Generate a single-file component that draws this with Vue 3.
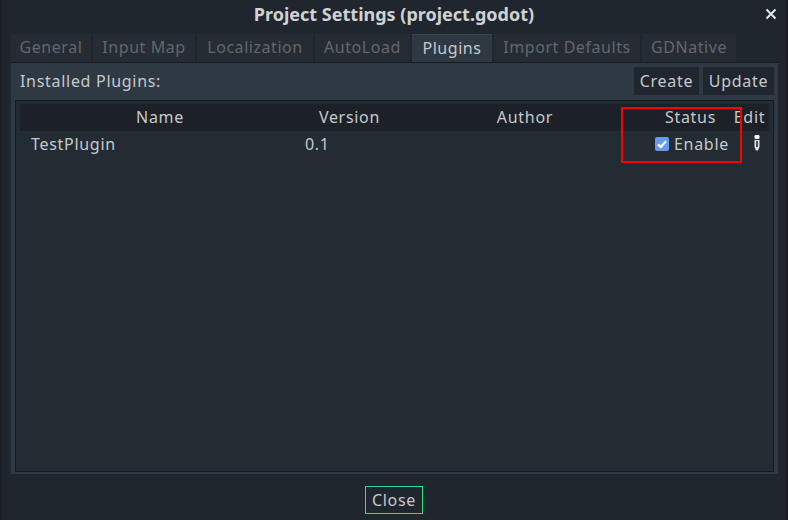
<template>
  <div class="window">
    <div class="titlebar">
      <span class="title">Project Settings (project.godot)</span>
      <svg class="close-x" width="12" height="12" viewBox="0 0 12 12">
        <path d="M1.5 1.5 L10.5 10.5 M10.5 1.5 L1.5 10.5" stroke="#e6e8ea" stroke-width="2" />
      </svg>
    </div>

    <div class="tabs">
      <div
        v-for="tab in tabs"
        :key="tab.name"
        class="tab"
        :class="{ active: tab.name === 'Plugins' }"
        :style="{ width: tab.width + 'px' }"
      >{{ tab.name }}</div>
    </div>

    <div class="panel">
      <div class="toolbar">
        <span class="installed">Installed Plugins:</span>
        <div class="buttons">
          <button class="btn create">Create</button>
          <button class="btn update">Update</button>
        </div>
      </div>

      <div class="tree">
        <div class="head row">
          <span class="col name center">Name</span>
          <span class="col version center">Version</span>
          <span class="col author center">Author</span>
          <span class="col status center">Status</span>
          <span class="col edit center">Edit</span>
        </div>
        <div class="row item">
          <span class="col name plugin">TestPlugin</span>
          <span class="col version ver">0.1</span>
          <span class="col author"></span>
          <span class="col status enable">
            <svg width="14" height="14" viewBox="0 0 14 14">
              <rect width="14" height="14" rx="2" fill="#699ce8" />
              <path d="M3 7.4 L5.8 10 L11 4.2" fill="none" stroke="#fff" stroke-width="2.2" />
            </svg>
            <span>Enable</span>
          </span>
          <span class="col edit pencil">
            <svg width="6" height="16" viewBox="0 0 6 16">
              <rect x="0.5" y="0" width="5" height="4" rx="1.2" fill="#f0f0f0" />
              <path d="M0.5 5 H5.5 V12 L4 15.5 H2 L0.5 12 Z M2.2 6 V12 H3.8 V6 Z" fill="#e0e0e0" fill-rule="evenodd" />
            </svg>
          </span>
        </div>
      </div>
    </div>

    <div class="footer">
      <button class="close-btn">Close</button>
    </div>

    <div class="marker"></div>
  </div>
</template>

<script setup>
const tabs = [
  { name: 'General', width: 80 },
  { name: 'Input Map', width: 102 },
  { name: 'Localization', width: 116 },
  { name: 'AutoLoad', width: 95 },
  { name: 'Plugins', width: 80 },
  { name: 'Import Defaults', width: 146 },
  { name: 'GDNative', width: 94 }
];
</script>

<style>
html,
body {
  margin: 0;
  background: #1a1e24;
}
</style>

<style scoped>
.window {
  position: relative;
  width: 784px;
  height: 520px;
  margin-left: 2px;
  box-sizing: border-box;
  padding: 1px 9px 0;
  background: #20262e;
  color: #c6c9cc;
  font-family: "Noto Sans", sans-serif;
  font-size: 16px;
  letter-spacing: 0.7px;
  overflow: hidden;
}

.titlebar {
  position: relative;
  height: 33px;
  display: flex;
  align-items: center;
  justify-content: center;
}

.title {
  font-size: 18px;
  font-weight: 700;
  color: #d0d2d4;
  letter-spacing: 0;
  margin-top: -8px;
}

.close-x {
  position: absolute;
  right: 0;
  top: 7px;
}

.tabs {
  display: flex;
  gap: 2px;
  height: 28px;
}

.tab {
  flex: none;
  box-sizing: border-box;
  height: 28px;
  line-height: 27px;
  letter-spacing: 0.55px;
  text-align: center;
  background: #262c34;
  color: #63676b;
}

.tab.active {
  background: #2e3943;
  color: #c6c9cc;
  border-top: 1px solid #3a4650;
}

.panel {
  width: 767px;
  height: 412px;
  box-sizing: border-box;
  padding: 4px;
  background: #2e3943;
  border-top: 1px solid #161a1f;
}

.toolbar {
  display: flex;
  justify-content: space-between;
  align-items: center;
  height: 28px;
  padding-bottom: 5px;
}

.installed {
  padding-left: 5px;
}

.buttons {
  display: flex;
  gap: 4px;
}

.btn {
  height: 28px;
  padding: 0;
  border: 0;
  background: #20262e;
  color: #c6c9cc;
  font: inherit;
  letter-spacing: inherit;
}

.create {
  width: 65px;
}

.update {
  width: 71px;
}

.tree {
  height: 372px;
  box-sizing: border-box;
  padding: 3px 4px;
  background: #232b33;
  border: 1px solid #161a1f;
}

.row {
  display: flex;
  align-items: center;
}

.head {
  height: 27px;
  padding-bottom: 2px;
  box-sizing: border-box;
  background: #1c2127;
}

.item {
  height: 27px;
  padding-bottom: 2px;
  box-sizing: border-box;
}

.col {
  flex: none;
  box-sizing: border-box;
}

.center {
  text-align: center;
}

.name {
  width: 280px;
}

.version {
  width: 99px;
}

.author {
  width: 252px;
}

.status {
  width: 79px;
}

.edit {
  width: 39px;
}

.plugin {
  padding-left: 11px;
}

.ver {
  padding-left: 5px;
}

.enable {
  display: flex;
  align-items: center;
  gap: 5px;
  padding-left: 4px;
}

.pencil {
  display: flex;
  justify-content: center;
  padding-left: 14px;
  margin-top: -2px;
}

.footer {
  display: flex;
  justify-content: center;
  padding-top: 12px;
}

.close-btn {
  width: 58px;
  height: 28px;
  padding: 0;
  border: 1px solid #2ee089;
  background: #20262e;
  color: #c6c9cc;
  font: inherit;
  letter-spacing: inherit;
}

.marker {
  position: absolute;
  left: 619px;
  top: 107px;
  width: 121px;
  height: 56px;
  box-sizing: border-box;
  border: 2px solid #f00;
}
</style>
